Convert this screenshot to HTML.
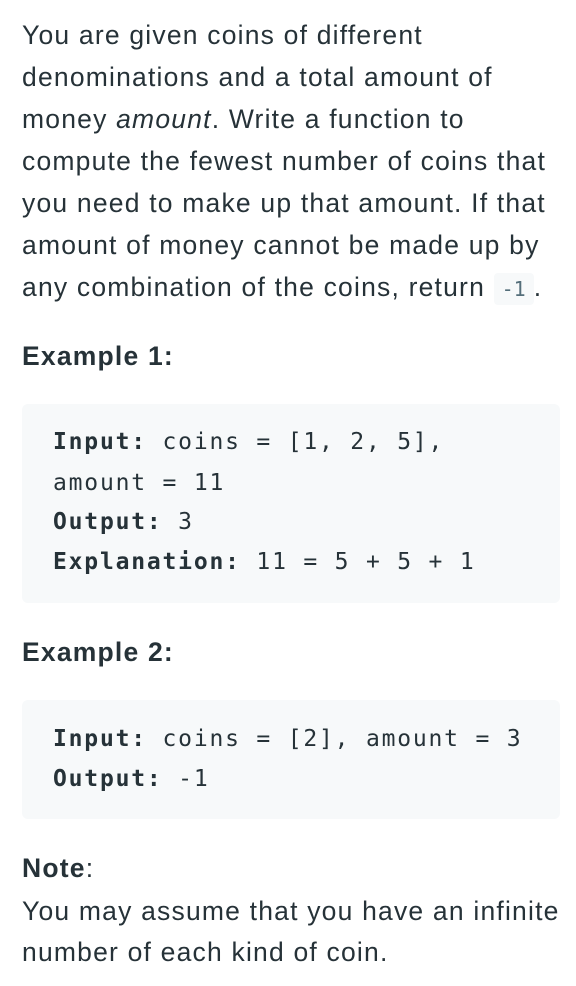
<!DOCTYPE html>
<html><head><meta charset="utf-8"><style>
body{margin:0;width:576px;height:986px;background:#fff;color:#263238;font-family:"Liberation Sans",sans-serif;position:relative;overflow:hidden}
.t{position:absolute;left:22px;font-size:26.5px;letter-spacing:1.2px;line-height:42px;white-space:nowrap}
.h{position:absolute;left:22px;font-size:26.5px;letter-spacing:1.2px;font-weight:bold;line-height:42px}
.blk{position:absolute;left:22px;width:538px;background:#f7f9fa;border-radius:6px}
.m{position:absolute;left:53px;font-family:"DejaVu Sans Mono","Liberation Mono",monospace;font-size:23px;letter-spacing:1.8px;line-height:40px;white-space:pre}
code{font-family:"DejaVu Sans Mono",monospace;font-size:20px;letter-spacing:0;background:#f7f9fa;color:#546e7a;padding:4px 8px;border-radius:4px}
</style></head><body>
<div class="t" style="top:14px">You are given coins of different</div>
<div class="t" style="top:56px">denominations and a total amount of</div>
<div class="t" style="top:98px">money <i>amount</i>. Write a function to</div>
<div class="t" style="top:140px">compute the fewest number of coins that</div>
<div class="t" style="top:182px">you need to make up that amount. If that</div>
<div class="t" style="top:224px">amount of money cannot be made up by</div>
<div class="t" style="top:266px">any combination of the coins, return <code>-1</code>.</div>
<div class="h" style="top:335px">Example 1:</div>
<div class="blk" style="top:404px;height:199px"></div>
<div class="m" style="top:422px"><b>Input:</b> coins = [1, 2, 5],</div>
<div class="m" style="top:463px">amount = 11</div>
<div class="m" style="top:502px"><b>Output:</b> 3</div>
<div class="m" style="top:542px"><b>Explanation:</b> 11 = 5 + 5 + 1</div>
<div class="h" style="top:631px">Example 2:</div>
<div class="blk" style="top:700px;height:119px"></div>
<div class="m" style="top:719px"><b>Input:</b> coins = [2], amount = 3</div>
<div class="m" style="top:759px"><b>Output:</b> -1</div>
<div class="t" style="top:847px"><b>Note</b>:</div>
<div class="t" style="top:890px">You may assume that you have an infinite</div>
<div class="t" style="top:931px">number of each kind of coin.</div>
</body></html>
